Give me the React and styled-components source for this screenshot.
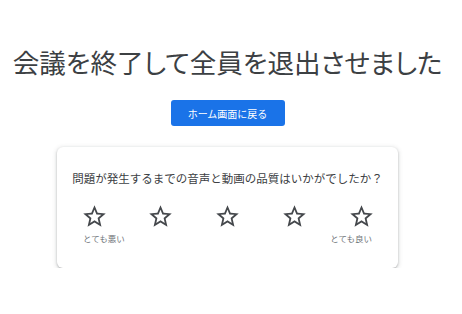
import React from 'react';
import styled, { createGlobalStyle } from 'styled-components';

const Global = createGlobalStyle`
body {
    margin: 0;
    background: #fff;
    font-family: "Noto Sans CJK JP", "Noto Sans", sans-serif;
}
`

const Page = styled.div`
display: flex;
flex-direction: column;
align-items: center;
padding: 47px 7px 0 0;
`

const Title = styled.h1`
margin: 0;
font-size: 26.6px;
line-height: 30px;
font-weight: 400;
color: #3c4043;
white-space: nowrap;
font-feature-settings: "palt";
`

const HomeButton = styled.button`
margin-top: 23px;
width: 114px;
height: 26px;
border: none;
border-radius: 3px;
background-color: #1a73e8;
color: #fff;
font-family: inherit;
font-size: 10px;
cursor: pointer;
`

const Card = styled.div`
margin-top: 21px;
width: 341px;
height: 121px;
box-sizing: border-box;
padding-top: 24px;
border-radius: 6px;
background: #fff;
box-shadow: 0 1px 2px rgba(60, 64, 67, 0.3), 0 1px 4px 1px rgba(60, 64, 67, 0.15);
`

const Question = styled.p`
margin: 0;
text-align: center;
font-size: 11.5px;
line-height: 14px;
color: #3c4043;
white-space: nowrap;
`

const Stars = styled.div`
margin: 18px 26px 0;
display: flex;
justify-content: space-between;
`

const StarButton = styled.button`
width: 22px;
height: 26px;
padding: 0;
border: none;
background: none;
display: flex;
align-items: center;
justify-content: center;
cursor: pointer;

svg {
    width: 27px;
    height: 27px;
    flex-shrink: 0;
    fill: #45484c;
}
`

const Labels = styled.div`
margin: 4px 26px 0;
display: flex;
justify-content: space-between;
font-size: 8.5px;
line-height: 10px;
color: #70757a;
`

const Star = () => (
    <svg viewBox="0 0 24 24">
        <path d="M22 9.24l-7.19-.62L12 2 9.19 8.63 2 9.240l5.46 4.73L5.82 21 12 17.27 18.18 21l-1.630-7.03L22 9.24zM12 15.4l-3.76 2.27 1-4.28-3.32-2.88 4.38-.38L12 6.1l1.71 4.04 4.38.38-3.32 2.88 1 4.28L12 15.4z" />
    </svg>
)

export default function App() {
    return (
        <Page>
            <Global />
            <Title>会議を終了して全員を退出させました</Title>
            <HomeButton>ホーム画面に戻る</HomeButton>
            <Card>
                <Question>問題が発生するまでの音声と動画の品質はいかがでしたか？</Question>
                <Stars>
                    {[1, 2, 3, 4, 5].map(n => (
                        <StarButton key={n} aria-label={`${n}`}><Star /></StarButton>
                    ))}
                </Stars>
                <Labels>
                    <span>とても悪い</span>
                    <span>とても良い</span>
                </Labels>
            </Card>
        </Page>
    )
}
